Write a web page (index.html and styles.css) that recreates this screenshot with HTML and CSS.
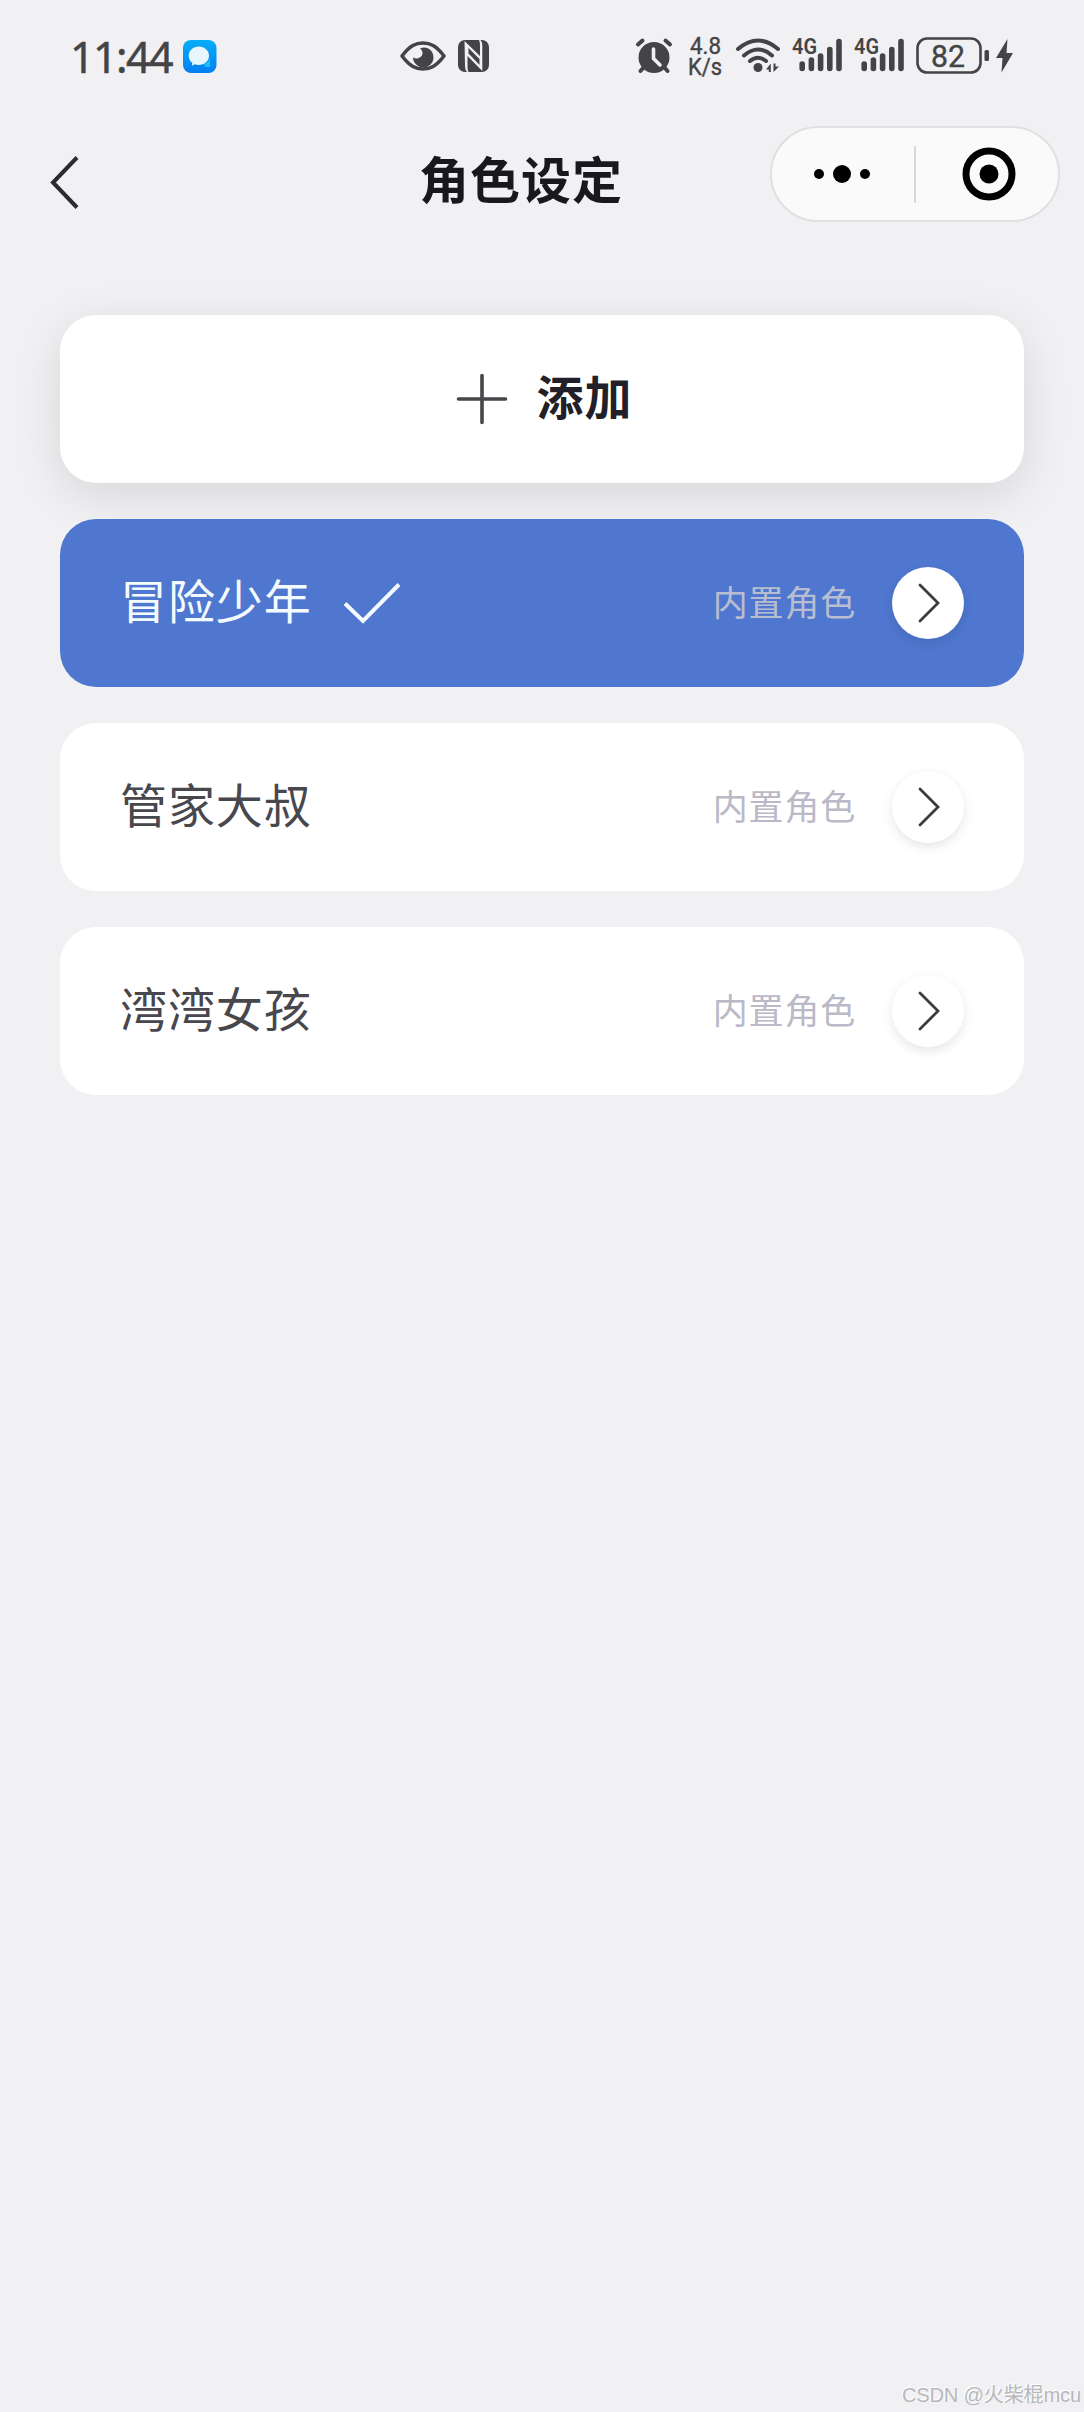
FILE: index.html
```html
<!DOCTYPE html>
<html lang="zh-CN">
<head>
<meta charset="utf-8">
<title>角色设定</title>
<link rel="stylesheet" href="styles.css">
</head>
<body>
<div class="screen">
  <div class="status">
    <div class="status-left">
      <span class="time">11:44</span>
      <svg class="app" width="34" height="34" viewBox="0 0 34 34">
        <defs><linearGradient id="sky" x1="0" y1="0" x2="0" y2="1"><stop offset="0" stop-color="#06adf8"/><stop offset="1" stop-color="#047ff0"/></linearGradient></defs>
        <rect width="33.5" height="33" rx="8" fill="url(#sky)"/>
        <path d="M21 24 Q27 22 27 17 V27 H22Z" fill="#1bc0f5"/>
        <path d="M15.800 6.500C21.500 6.500 26 10.500 26 15.700S21.500 25 15.800 25C14.200 25 13 24.800 11.900 24.300L8.800 25.700L9.300 22.800C7 21 5.700 18.600 5.700 15.700C5.700 10.500 10.200 6.500 15.800 6.500Z" fill="#e6f6fc"/>
      </svg>
    </div>
    <div class="status-mid">
      <svg width="46" height="32" viewBox="0 0 46 32">
        <path d="M2 16C10 5.500 16 3 23 3S36 5.500 44 16C36 26.500 30 29 23 29S10 26.500 2 16Z" fill="none" stroke="#444446" stroke-width="3.600" stroke-linejoin="round"/>
        <path d="M20 8.500C27 5.500 33.500 10.500 33.500 17.500C33.500 23 29 27.500 23.500 27.500C18 27.500 13 23 13 17.500C17 20 22.500 17.500 22.500 13C22.500 11 21.500 9.500 20 8.500Z" fill="#444446"/>
      </svg>
      <svg width="32" height="32" viewBox="0 0 32 32">
        <rect width="31" height="32" rx="7" fill="#444446"/>
        <path d="M6.500 1L22 16V6Q22 2 21 0H22.500Q24.300 2 24.300 6V31L9.500 16V27Q9.500 30 10.500 32H9Q7 30 7 26Z" fill="#f1f1f4"/>
        <path d="M10.500 8L21.500 19V25L10.500 13.500Z" fill="#444446"/>
      </svg>
    </div>
    <div class="status-right">
      <svg class="alarm" width="36" height="36" viewBox="0 0 36 36">
        <circle cx="18" cy="19.500" r="15.500" fill="#444446"/>
        <path d="M2 6.500L6.500 2.500M34 6.500L29.500 2.500M8 29L4.500 33M28 29L31.500 33" stroke="#444446" stroke-width="4" stroke-linecap="round"/>
        <path d="M17.500 11V20.500L24 27" fill="none" stroke="#f1f1f4" stroke-width="3.600" stroke-linecap="round"/>
      </svg>
      <svg class="speed" width="36" height="42" viewBox="0 0 36 42" fill="#444446">
        <text x="1" y="17" textLength="31" lengthAdjust="spacingAndGlyphs">4.8</text>
        <text x="-1" y="38" textLength="34" lengthAdjust="spacingAndGlyphs">K/s</text>
      </svg>
      <svg class="wifi" width="44" height="36" viewBox="0 0 44 36">
        <g fill="none" stroke="#444446" stroke-width="4" stroke-linecap="round">
          <path d="M2 11Q22-6 42 11M8 17.500Q22 5.500 36 17.500M14 23Q22 16.500 30 23"/>
        </g>
        <circle cx="22" cy="29.500" r="4.500" fill="#444446"/>
        <path d="M34.800 25.500V34H32.800V31.500H30ZM37.500 34V25.500H39.500V28.500H43Z" fill="#444446"/>
      </svg>
      <svg class="signal" width="50" height="36" viewBox="0 0 50 36">
        <text class="net" x="0" y="16" textLength="25" lengthAdjust="spacingAndGlyphs" fill="#444446">4G</text>
        <path d="M10.200 26V30.500M19.400 22V30.500M28.600 18V30.500M37.800 11.500V30.500M47 3.500V30.500" stroke="#444446" stroke-width="5.600" stroke-linecap="round"/>
      </svg>
      <svg class="signal" width="50" height="36" viewBox="0 0 50 36">
        <text class="net" x="0" y="16" textLength="25" lengthAdjust="spacingAndGlyphs" fill="#444446">4G</text>
        <path d="M10.200 26V30.500M19.400 22V30.500M28.600 18V30.500M37.800 11.500V30.500M47 3.500V30.500" stroke="#444446" stroke-width="5.600" stroke-linecap="round"/>
      </svg>
      <svg class="battery" width="98" height="38" viewBox="0 0 98 38">
        <rect x="1.500" y="1.500" width="63" height="34" rx="9.500" fill="none" stroke="#444446" stroke-width="2.600"/>
        <text class="level" x="15" y="29.500" textLength="34" lengthAdjust="spacingAndGlyphs" fill="#444446">82</text>
        <rect x="68.500" y="13" width="4.500" height="11" rx="1.500" fill="#444446"/>
        <path d="M91.500 2L80 21H86.500L85.500 35.500L97 16H90.500Z" fill="#444446"/>
      </svg>
    </div>
  </div>

  <header class="nav">
    <svg class="back" width="30" height="54" viewBox="0 0 30 54"><path d="M27 2.500L3 27.500L27 52.500" fill="none" stroke="#2b2b2d" stroke-width="4"/></svg>
    <h1>角色设定</h1>
    <div class="capsule">
      <svg class="dots" width="56" height="18" viewBox="0 0 56 18"><circle cx="5" cy="9" r="5"/><circle cx="28" cy="9" r="9"/><circle cx="51" cy="9" r="5"/></svg>
      <i class="divider"></i>
      <svg class="target" width="54" height="54" viewBox="0 0 54 54"><circle cx="27" cy="27" r="23" fill="none" stroke="#000" stroke-width="7"/><circle cx="27" cy="27" r="9.500"/></svg>
    </div>
  </header>

  <main class="list">
    <button class="card add">
      <svg width="50" height="50" viewBox="0 0 50 50"><path d="M1.500 25H48.500M25 1.500V48.500" stroke="#46464b" stroke-width="3.600" stroke-linecap="round"/></svg>
      <span>添加</span>
    </button>
    <section class="card role active">
      <span class="name">冒险少年</span>
      <svg class="check" width="58" height="42" viewBox="0 0 58 42"><path d="M2 21.500L20 39L56 2.500" fill="none" stroke="#f4fbff" stroke-width="4"/></svg>
      <span class="meta">内置角色</span>
      <span class="go"><svg width="24" height="40" viewBox="0 0 24 40"><path d="M4 2L22 20L4 38" fill="none" stroke="#3c3c40" stroke-width="2.800" stroke-linecap="round"/></svg></span>
    </section>
    <section class="card role">
      <span class="name">管家大叔</span>
      <span class="meta">内置角色</span>
      <span class="go"><svg width="24" height="40" viewBox="0 0 24 40"><path d="M4 2L22 20L4 38" fill="none" stroke="#3c3c40" stroke-width="2.800" stroke-linecap="round"/></svg></span>
    </section>
    <section class="card role">
      <span class="name">湾湾女孩</span>
      <span class="meta">内置角色</span>
      <span class="go"><svg width="24" height="40" viewBox="0 0 24 40"><path d="M4 2L22 20L4 38" fill="none" stroke="#3c3c40" stroke-width="2.800" stroke-linecap="round"/></svg></span>
    </section>
  </main>

  <footer class="credit">CSDN @火柴棍mcu</footer>
</div>
</body>
</html>
```
FILE: styles.css
```css
* { box-sizing: border-box; }
body { margin: 0; background: #f1f1f4; font-family: "Noto Sans CJK SC", sans-serif; }
svg { display: block; flex: none; overflow: visible; }
.screen { width: 1084px; height: 2412px; display: flex; flex-direction: column; overflow: hidden; }

.status { height: 112px; display: flex; padding: 0 70px 0 70px; color: #444446; }
.status-left { width: 330px; display: flex; padding-top: 40px; }
.time { width: 113px; font: 400 43px/33px "Noto Sans", sans-serif; letter-spacing: -1.600px; white-space: nowrap; -webkit-text-stroke: 0.500px #444446; }
.status-mid { width: 236px; display: flex; gap: 12px; padding-top: 40px; }
.status-right { display: flex; padding-top: 37px; }
.alarm { margin-top: 1px; }
.speed { margin-left: 17px; font: 400 23px Roboto, sans-serif; stroke: #444446; stroke-width: 0.400px; }
.wifi { margin-left: 11px; margin-top: 1px; }
.signal { margin-left: 12px; margin-top: 1px; }
.net { font: 600 22px Roboto, sans-serif; }
.battery { margin-left: 12px; }
.level { font: 400 32px Roboto, sans-serif; stroke: #444446; stroke-width: 0.400px; }

.nav { height: 203px; display: flex; align-items: flex-start; padding: 14px 24px 0 50px; }
.back { margin-top: 29px; }
h1 { width: 206px; margin: 21px 0 0 339px; font-size: 50px; line-height: 60px; font-weight: 700; color: #19191b; letter-spacing: 1px; white-space: nowrap; }
.capsule { width: 290px; height: 96px; margin-left: auto; display: flex; align-items: center; padding: 0 42px 0 42px; border: 2px solid #e0e0e2; border-radius: 48px; background: #fafafb; }
.divider { flex: none; width: 2px; height: 57px; margin-left: 44px; background: #d9d9db; }
.target { margin-left: 46px; }

.list { display: flex; flex-direction: column; gap: 36px; padding: 0 60px; }
.card { height: 168px; border: 0; border-radius: 36px; background: #fff; display: flex; align-items: center; font-family: inherit; }
.add { justify-content: center; gap: 30px; padding: 0 0 0 5px; font-size: 47px; font-weight: 700; color: #221f29; letter-spacing: 1px; box-shadow: 0 12px 48px rgba(0, 0, 0, 0.110); }
.add span { line-height: 60px; padding-bottom: 8px; }
.role { padding: 0 60px; color: #48474d; }
.name { font-size: 47px; line-height: 60px; padding-bottom: 8px; letter-spacing: 0.900px; }
.active { background: #4f77d0; }
.active .name { color: #f4fbff; }
.check { margin-left: 31px; }
.meta { margin-left: auto; font-size: 35px; line-height: 48px; padding-bottom: 5px; letter-spacing: 0.800px; color: #bab9c7; }
.active .meta { color: #b8bdcf; }
.go { width: 72px; height: 72px; margin-left: 36px; display: flex; align-items: center; justify-content: center; border-radius: 50%; background: #fff; box-shadow: 0 4px 12px rgba(0, 0, 0, 0.100); }

.credit { margin-top: auto; padding: 0 3px 2px 0; text-align: right; font: 20px/30px "Liberation Sans", "Noto Sans CJK SC", sans-serif; letter-spacing: -0.100px; color: #b8b8bb; text-shadow: -1px -1px 0 #fff; }
```
